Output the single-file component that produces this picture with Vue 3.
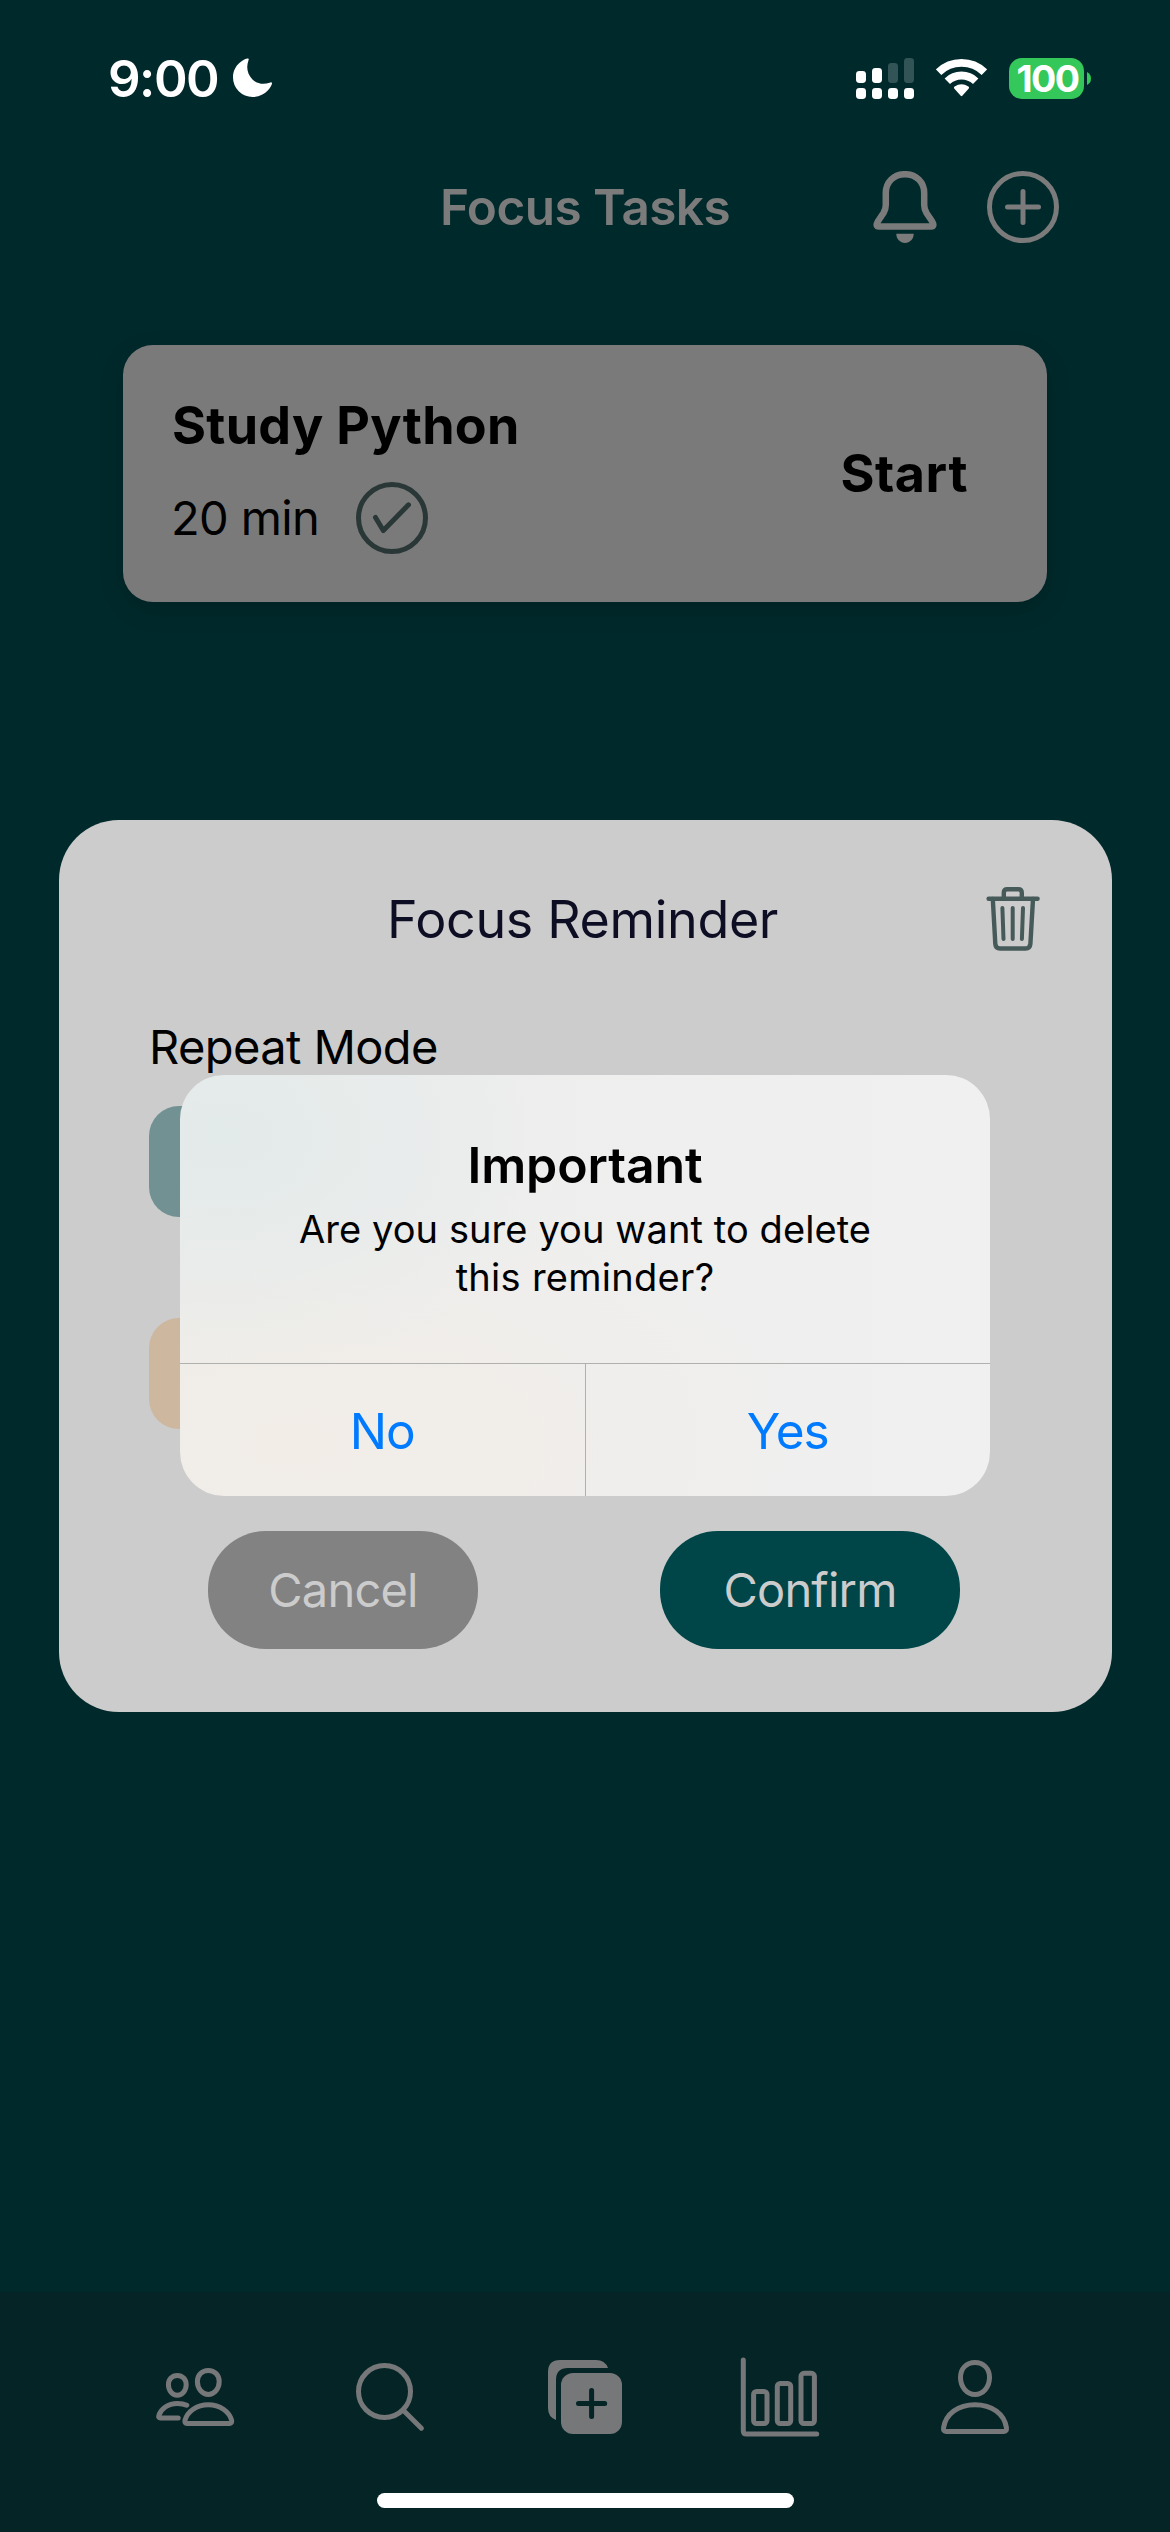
<script setup>
import { ref } from 'vue'

const task = ref({ name: 'Study Python', duration: '20 min' })

const signalBars = [
  { x: 0, y: 13, h: 12, on: true },
  { x: 16, y: 10, h: 15, on: true },
  { x: 32, y: 5, h: 20, on: false },
  { x: 48, y: 0, h: 25, on: false }
]
</script>

<template>
  <div class="screen">
    <header class="status">
      <span class="clock">9:00</span>
      <svg class="moon" width="40" height="40" viewBox="0 0 40 40">
        <path fill="#fff" d="M15 .4C13 0 0 5.5 0 19.5A19.5 19.5 0 0 0 19.5 39C33 39 39.4 27 39 25C38.7 23.8 37.5 24.3 36.5 24.7C31 26.7 24.5 26.2 19.5 21.5C13.8 16 13.2 8.5 15.5 2.2C16 1 15.7 .3 15 .4Z" />
      </svg>
      <div class="indicators">
        <svg width="58" height="41" viewBox="0 0 58 41" fill="#fff">
          <template v-for="bar in signalBars" :key="bar.x">
            <rect :x="bar.x" :y="bar.y" width="10" :height="bar.h" rx="3.4" :fill="bar.on ? '#fff' : '#335456'" />
            <rect :x="bar.x" y="30" width="10" height="11" rx="3.4" />
          </template>
        </svg>
        <svg width="51" height="38" viewBox="0 0 51 38">
          <g fill="none" stroke="#fff" stroke-width="7.8">
            <path d="M2.6 13.2A33 33 0 0 1 48.4 13.2" />
            <path d="M11.3 22.2A20.5 20.5 0 0 1 39.7 22.2" />
          </g>
          <path fill="#fff" d="M18.2 29.4Q17.4 28.4 18.6 27.6Q25.5 23 32.4 27.6Q33.6 28.4 32.8 29.4L26.3 36.8Q25.5 37.6 24.7 36.8Z" />
        </svg>
        <div class="battery">
          <span class="level">100</span>
          <svg width="4" height="13" viewBox="0 0 4 13"><path fill="#34c759" d="M0 0Q4 2 4 6.5T0 13Z" /></svg>
        </div>
      </div>
    </header>

    <nav class="topbar">
      <h1 class="topbar-title">Focus Tasks</h1>
      <div class="topbar-actions">
        <svg width="64" height="73" viewBox="0 0 64 73">
          <path fill="none" stroke="#7b7b7b" stroke-width="6.5" stroke-linejoin="round" d="M32 3.2C20.8 3.2 12.8 11 12.8 22V34C12.8 37.5 12 39.5 10.5 42L4.8 50.5C2.8 54 3.5 55.5 6 55.5H58C60.5 55.5 61.2 54 59.2 50.5L53.5 42C52 39.5 51.2 37.5 51.2 34V22C51.2 11 43.2 3.2 32 3.2Z" />
          <path fill="#7b7b7b" d="M23.3 62.8H40.7C40.7 68.1 37 71.9 32 71.9S23.3 68.1 23.3 62.8Z" />
        </svg>
        <svg width="72" height="72" viewBox="0 0 72 72" fill="none" stroke="#7b7b7b" stroke-width="5" stroke-linecap="round">
          <circle cx="36" cy="36" r="33.5" />
          <path d="M36 20.5V51.5M20.5 36H51.5" />
        </svg>
      </div>
    </nav>

    <section class="task">
      <div class="task-info">
        <h2 class="task-name">{{ task.name }}</h2>
        <div class="task-row">
          <span class="task-duration">{{ task.duration }}</span>
          <svg width="72" height="72" viewBox="0 0 72 72" fill="none" stroke="#2a3737" stroke-width="5" stroke-linecap="round" stroke-linejoin="round">
            <circle cx="36" cy="36" r="33.5" />
            <path d="M19.5 35.5L27.3 48.5L52.5 22.8" />
          </svg>
        </div>
      </div>
      <button class="task-start">Start</button>
    </section>

    <footer class="tabs">
      <svg class="tab" viewBox="0 0 80 80">
        <path d="M22.3 18.4C27.5 18.4 31.2 22.3 31.2 27.6C31.2 33.5 27.3 38.2 22.3 38.2S13.4 33.5 13.4 27.6C13.4 22.3 17.1 18.4 22.3 18.4Z" />
        <path d="M53.3 13.4C59.6 13.4 64.2 18 64.2 24.5C64.2 31.6 59.4 37.4 53.3 37.4S42.4 31.6 42.4 24.5C42.4 18 47 13.4 53.3 13.4Z" />
        <path d="M31.8 48.2C29 46.8 26 46.4 22.3 46.4C12.8 46.4 6 52 3.9 58.2Q3 61 5.5 61H23.2" />
        <path d="M32 66.4H74.8Q77.2 66.4 76.6 63.2C74.2 54.5 65 47.7 53.3 47.7C41.6 47.7 32.4 54.5 30 63.2Q29.4 66.4 32 66.4Z" />
      </svg>
      <svg class="tab" viewBox="0 0 80 80">
        <circle cx="34.5" cy="34.5" r="26" />
        <path d="M53.5 53.5L71.4 71.2" />
      </svg>
      <svg class="tab" viewBox="0 0 80 80">
        <path class="solid" d="M63 11H23Q11 11 11 23V63Q3 60 3 51V15Q3 3 15 3H51Q60 3 63 11Z" />
        <rect class="solid" x="16" y="16" width="61" height="61" rx="12" />
        <path class="cut" d="M46.6 33.5V59.5M33.5 46.6H59.7" />
      </svg>
      <svg class="tab" viewBox="0 0 80 80">
        <path d="M3.3 3V74Q3.3 77 6.5 77H76.7" />
        <rect x="13.6" y="34.5" width="13.4" height="32" rx="3" />
        <rect x="37.3" y="26.5" width="13.4" height="40" rx="3" />
        <rect x="61" y="16.3" width="13.4" height="50.2" rx="3" />
      </svg>
      <svg class="tab" viewBox="0 0 80 80">
        <path d="M40 5.5C48.5 5.5 54.5 11.5 54.5 20.5C54.5 30 48 37.5 40 37.5S25.5 30 25.5 20.5C25.5 11.5 31.5 5.5 40 5.5Z" />
        <path d="M11 74.4H69Q72 74.4 71.4 70.5C69.2 57 57 47.7 40 47.7C23 47.7 10.8 57 8.6 70.5Q8 74.4 11 74.4Z" />
      </svg>
      <div class="home-indicator"></div>
    </footer>

    <section class="reminder">
      <div class="reminder-head">
        <h2 class="reminder-title">Focus Reminder</h2>
        <svg class="trash" width="54" height="64" viewBox="0 0 54 64" fill="none" stroke="#465b59" stroke-width="4.4" stroke-linecap="round">
          <path d="M2.6 11.8H51.6" />
          <path d="M17.8 11.5V5.7Q17.8 2.3 21.2 2.3H32.4Q35.8 2.3 35.8 5.7V11.5" />
          <path d="M6.8 12L9.3 56.8Q9.6 61.5 14 61.5H39.6Q44 61.5 44.4 56.8L47 12" />
          <path stroke-width="4" d="M16.4 21L17.5 52M26.7 21V52M37 21L35.9 52" />
        </svg>
      </div>
      <div class="reminder-label">Repeat Mode</div>
      <div class="option teal"></div>
      <div class="option sand"></div>
      <div class="reminder-actions">
        <button class="pill cancel">Cancel</button>
        <button class="pill confirm">Confirm</button>
      </div>
    </section>

    <div class="alert" role="alertdialog">
      <h3 class="alert-title">Important</h3>
      <p class="alert-text">Are you sure you want to delete<br><span class="second">this reminder?</span></p>
      <div class="alert-actions">
        <button>No</button>
        <button class="yes">Yes</button>
      </div>
    </div>
  </div>
</template>

<style>
body {
  background: #00292b;
}
</style>

<style scoped>
.screen {
  position: relative;
  display: flex;
  flex-direction: column;
  width: 1170px;
  height: 2532px;
  overflow: hidden;
  background: #00292b;
  color: #000;
  font-family: Inter, "Liberation Sans", sans-serif;
}

.screen h1,
.screen h2,
.screen h3,
.screen p {
  margin: 0;
}

.screen svg {
  display: block;
  flex: none;
}

.screen button {
  border: 0;
  padding: 0;
  background: none;
  font-family: inherit;
}

.status {
  display: flex;
  align-items: center;
  height: 156px;
  padding: 0 79px 0 108px;
  color: #fff;
}

.clock {
  font-size: 51px;
  font-weight: 600;
  letter-spacing: -1.5px;
}

.moon {
  margin-left: 15px;
}

.indicators {
  display: flex;
  align-items: center;
  gap: 22px;
  margin-left: auto;
}

.battery {
  display: flex;
  align-items: center;
  gap: 3px;
}

.level {
  width: 75px;
  height: 41px;
  padding-left: 2px;
  box-sizing: border-box;
  border-radius: 13px;
  background: #34c759;
  font-size: 37.5px;
  font-weight: 700;
  line-height: 41px;
  letter-spacing: -1.6px;
  text-align: center;
}

.topbar {
  display: grid;
  grid-template-columns: 1fr auto 1fr;
  align-items: center;
  height: 102px;
  color: #7b7b7b;
}

.topbar-title {
  grid-column: 2;
  font-size: 49.5px;
  font-weight: 600;
  letter-spacing: -0.58px;
}

.topbar-actions {
  display: flex;
  align-items: center;
  justify-content: flex-end;
  gap: 50px;
  padding-right: 111px;
}

.task {
  display: flex;
  align-items: center;
  justify-content: space-between;
  height: 257px;
  margin: 87px 123px 0;
  padding: 0 79px 0 49px;
  box-sizing: border-box;
  border-radius: 30px;
  background: #7a7a7a;
  box-shadow: 0 8px 24px rgba(0, 0, 0, 0.16);
}

.task-name {
  font-size: 52px;
  font-weight: 700;
  line-height: 60px;
  letter-spacing: 0.3px;
}

.task-row {
  display: flex;
  align-items: center;
  gap: 37px;
  margin: 26px 0 -3px -1px;
  font-size: 47px;
  letter-spacing: -0.62px;
}

.task-duration {
  padding-bottom: 2px;
}

.screen .task-start {
  font-size: 52px;
  font-weight: 700;
  letter-spacing: 0.57px;
  color: #000;
}

.tabs {
  position: relative;
  display: grid;
  grid-template-columns: repeat(5, 195px);
  justify-content: center;
  justify-items: center;
  align-content: start;
  height: 240px;
  margin-top: auto;
  padding-top: 65px;
  box-sizing: border-box;
  background: #052426;
}

.tab {
  width: 80px;
  height: 80px;
  fill: none;
  stroke: #767779;
  stroke-width: 5;
  stroke-linecap: round;
  stroke-linejoin: round;
}

.tab .solid {
  fill: #767779;
  stroke: none;
}

.tab .cut {
  stroke: #052426;
}

.home-indicator {
  position: absolute;
  bottom: 24px;
  left: 377px;
  width: 417px;
  height: 15px;
  border-radius: 8px;
  background: #fff;
}

.reminder {
  position: absolute;
  top: 820px;
  left: 59px;
  width: 1053px;
  height: 892px;
  padding: 67px 0 0 90px;
  box-sizing: border-box;
  border-radius: 60px;
  background: #ccc;
}

.reminder-head {
  display: grid;
  grid-template-columns: 1fr auto 1fr;
  align-items: center;
  height: 64px;
  margin-left: -90px;
}

.screen .reminder-title {
  grid-column: 2;
  margin-right: 6px;
  font-size: 52px;
  font-weight: 400;
  letter-spacing: -0.34px;
  color: #0d0e24;
}

.trash {
  justify-self: end;
  margin-right: 72px;
}

.reminder-label {
  margin-top: 68px;
  font-size: 47px;
  line-height: 56px;
  letter-spacing: -0.6px;
}

.option {
  width: 320px;
  height: 111px;
  border-radius: 30px;
}

.teal {
  margin-top: 31px;
  background: #729192;
}

.sand {
  margin-top: 101px;
  background: #cdb89f;
}

.reminder-actions {
  display: flex;
  gap: 182px;
  margin: 102px 0 0 59px;
}

.screen .pill {
  width: 270px;
  height: 118px;
  padding-bottom: 2px;
  border-radius: 58px;
  background: #828282;
  color: #ccc;
  font-size: 47px;
  letter-spacing: -0.8px;
}

.screen .confirm {
  width: 300px;
  background: #004548;
}

.alert {
  position: absolute;
  top: 1075px;
  left: 180px;
  display: flex;
  flex-direction: column;
  width: 810px;
  height: 421px;
  padding-top: 60px;
  box-sizing: border-box;
  overflow: hidden;
  border-radius: 44px;
  background:
    radial-gradient(ellipse 360px 240px at 40px 60px, #e3eaea, rgba(227, 234, 234, 0)),
    radial-gradient(ellipse 520px 260px at 120px 370px, #f2ede7, rgba(242, 237, 231, 0)),
    linear-gradient(90deg, #ededec, #f0f0f0);
  text-align: center;
}

.alert-title {
  font-size: 50px;
  font-weight: 600;
  line-height: 60px;
  letter-spacing: -0.12px;
}

.screen .alert-text {
  margin-top: 10px;
  font-size: 38px;
  line-height: 48px;
  letter-spacing: 0.09px;
}

.second {
  letter-spacing: 0.28px;
}

.alert-actions {
  display: flex;
  height: 133px;
  margin-top: auto;
  border-top: 1px solid #b0b0ae;
  box-sizing: border-box;
}

.screen .alert-actions button {
  flex: 1;
  padding-top: 2px;
  color: #007aff;
  font-size: 49.5px;
  letter-spacing: -1px;
}

.screen .alert-actions .yes {
  border-left: 1px solid #b0b0ae;
}
</style>
